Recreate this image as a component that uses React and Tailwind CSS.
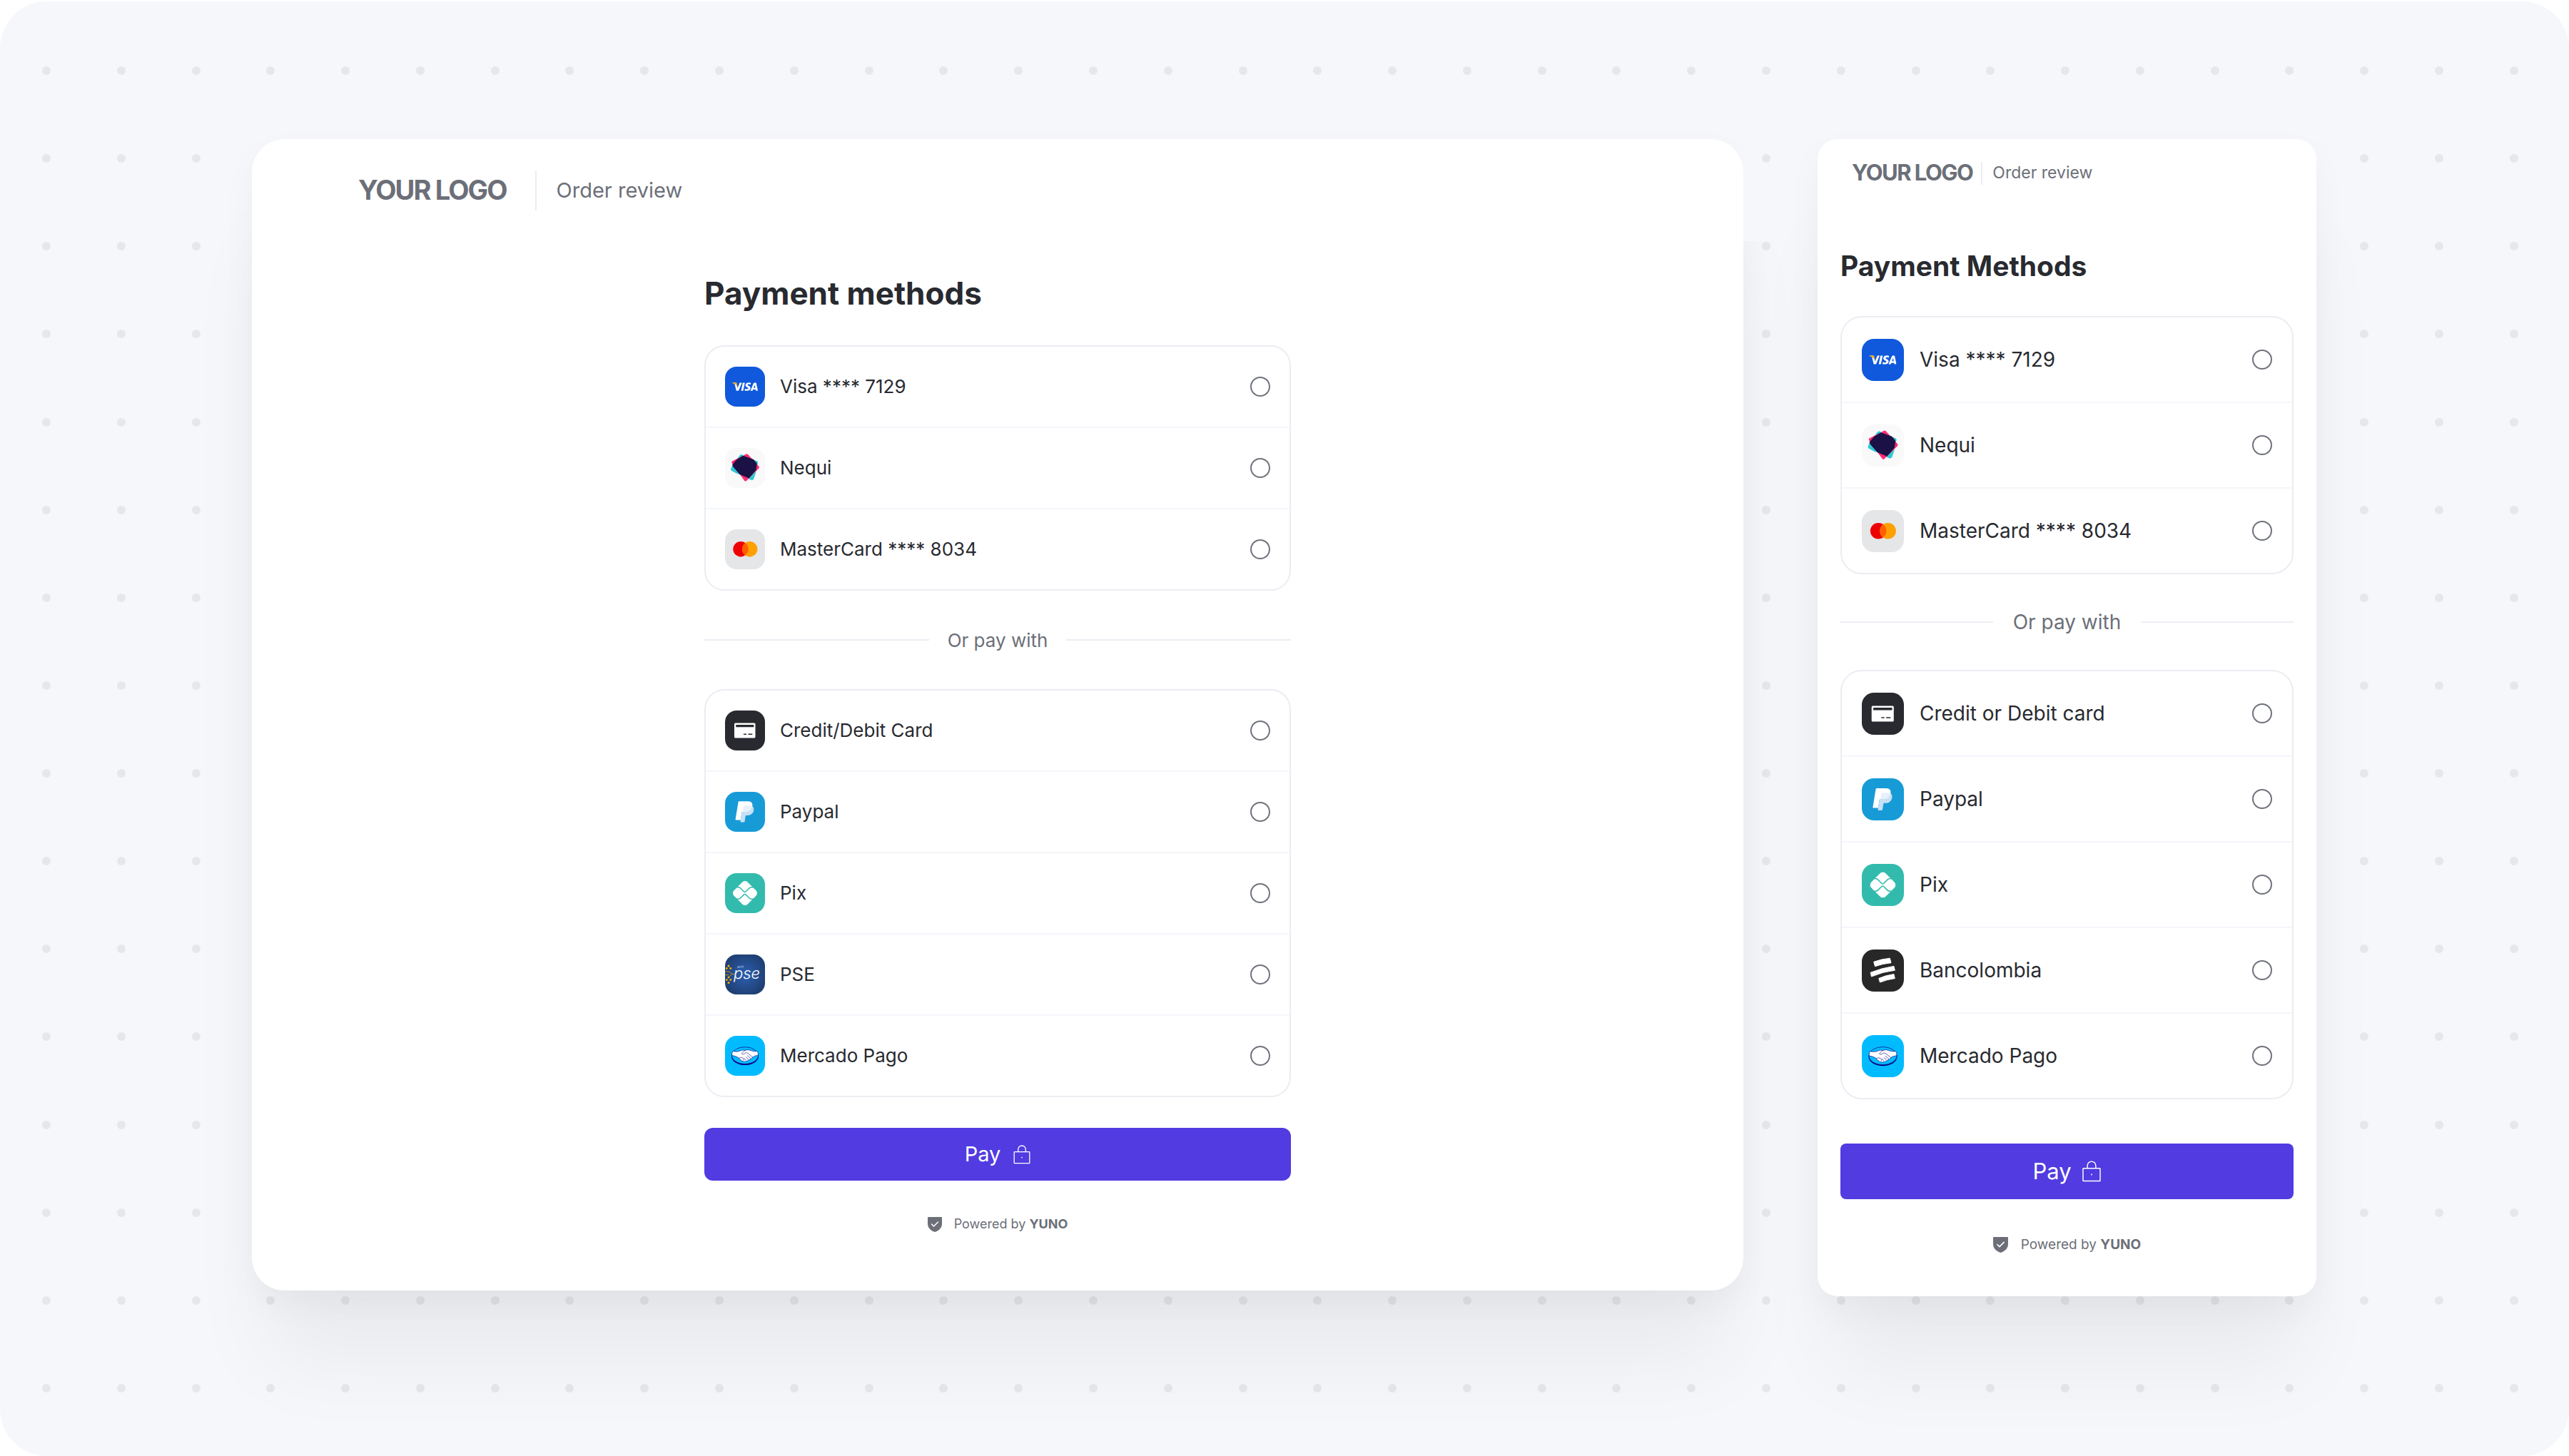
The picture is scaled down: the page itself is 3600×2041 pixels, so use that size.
import React from "react";
import { SiVisa } from "react-icons/si";
import { FaPix } from "react-icons/fa6";

function VisaIcon() {
  return (
    <span className="flex size-full items-center justify-center bg-[#1059dc]">
      <svg viewBox="0 0 56 56" className="size-full" aria-hidden="true">
        <SiVisa x="10" y="10" size={36} color="#ffffff" />
        <path d="M9.800 22.300h5.200c.8 0 1.300.4 1.500 1.200l1.100 5.200c-1.300-3-4-5.200-7.800-6.200z" fill="#f5a60b" />
      </svg>
    </span>
  );
}

function NequiIcon() {
  return (
    <svg viewBox="0 0 56 56" className="size-full bg-[#f9f9f9]" aria-hidden="true">
      <path d="M23 11.500L44 20.500L37 43L10.500 29.500z" fill="#2fc8d6" stroke="#2fc8d6" strokeWidth="4" strokeLinejoin="round" />
      <path d="M30.500 10.200L46 27.200L28.700 44.500L11.300 20z" fill="#ff2d73" stroke="#ff2d73" strokeWidth="4" strokeLinejoin="round" />
      <path d="M41.500 17l3.500 1.500c1 .5 1.300 1.300 1 2.300l-1 3zM9.600 25.500l10 12-10.300-5.500c-1-.6-1.300-1.500-1-2.500zM44 32l-3.800 11.500c-.4 1.100-1.200 1.600-2.300 1.300l-4-2zM17.500 14l3.500-4c.8-.9 1.600-1.100 2.700-.7l2.800 1.200z" fill="#2fc8d6" />
      <path d="M24 11.500c1-.6 1.800-.6 2.800-.3L40 16l4 4.700c.6.700.8 1.500.7 2.400l-1.200 8L33.500 42.500 20.500 37 10.800 25.800c-.6-.9-.8-1.900-.3-2.900L16.500 16z" fill="#1b1145" />
    </svg>
  );
}

function MasterCardIcon() {
  return (
    <svg viewBox="0 0 56 56" className="size-full bg-[#e5e6e8]" aria-hidden="true">
      <circle cx="22" cy="27.700" r="10.700" fill="#ed0006" />
      <circle cx="34.700" cy="27.700" r="10.700" fill="#ffa000" />
      <path d="M28.350 19.100a10.700 10.700 0 0 1 0 17.200a10.700 10.700 0 0 1 0-17.200z" fill="#ff5f00" />
    </svg>
  );
}

function CreditCardIcon() {
  return (
    <svg viewBox="0 0 56 56" className="size-full bg-[#282a30]" aria-hidden="true">
      <rect x="13" y="17.500" width="29.500" height="21" rx="1.500" fill="#fff" />
      <path d="M15.300 20h25v3.300h-25z" fill="#282a30" />
      <path d="M26.500 33.200h3M33 33.200h4.800" stroke="#282a30" strokeWidth="1.500" strokeLinecap="round" />
    </svg>
  );
}

function PaypalIcon() {
  return (
    <svg viewBox="0 0 56 56" className="size-full bg-[#179bd7]" aria-hidden="true">
      <path d="M20.300 13.200h12.200c4.600 0 6.600 3 5.800 7-1 5.400-4.800 7.800-9.800 7.800h-3.600c-.8 0-1.400.5-1.500 1.300l-1.600 10.200h-6.500c-.5 0-.8-.4-.7-.9l4-24.300c.1-.7.800-1.100 1.700-1.100z" fill="#fff" />
      <path d="M38.300 20.200c1.800 1.200 2.400 3.300 1.900 5.800-1 4.900-4.500 7-9 7h-1.200c-.7 0-1.200.5-1.300 1.100l-1.200 7.700c-.1.500-.5.800-1 .8H22c-.4 0-.7-.4-.6-.8l2-12.500c.1-.8.700-1.300 1.500-1.300h3.600c5 0 8.800-2.400 9.800-7.800z" fill="#c7e0f5" />
      <path d="M26.500 19.500c3.500-.6 8-.6 11.800.7-1 5.400-4.800 7.800-9.800 7.800h-3.600l1-7.300c.1-.7.300-1.100.6-1.200z" fill="#e8f1fb" />
    </svg>
  );
}

function PixIcon() {
  return (
    <svg viewBox="0 0 56 56" className="size-full bg-[#32bbad]" aria-hidden="true">
      <FaPix x="11" y="11" size={34} color="#ffffff" />
    </svg>
  );
}

function PseIcon() {
  return (
    <svg viewBox="0 0 56 56" className="size-full" aria-hidden="true">
      <defs>
        <radialGradient id="pse-glow" cx="50%" cy="50%" r="55%">
          <stop offset="0" stopColor="#2c5fb2" />
          <stop offset="1" stopColor="#1f3f72" />
        </radialGradient>
      </defs>
      <rect width="56" height="56" fill="url(#pse-glow)" />
      <g fill="#f9b000">
        <circle cx="5" cy="16" r="1.500" />
        <circle cx="2.300" cy="19.500" r="1.400" />
        <circle cx="7.800" cy="19.500" r="1.400" />
        <circle cx="5" cy="32" r="1.400" />
        <circle cx="2.300" cy="35.500" r="1.400" />
        <circle cx="7.800" cy="35.500" r="1.400" />
        <circle cx="5" cy="39.500" r="1.500" />
      </g>
      <path d="M0 24h6l4 3.500h4M0 28.500h5M5 32l4.500-4.500" fill="none" stroke="#c98f1e" strokeWidth="1" />
      <text x="12" y="34" fill="#fff" fontFamily="Inter, 'Liberation Sans', sans-serif" fontStyle="italic" fontWeight="300" fontSize="22">pse</text>
      <text x="17" y="19" fill="#b9c8e4" fontFamily="Inter, 'Liberation Sans', sans-serif" fontStyle="italic" fontSize="5">ach</text>
    </svg>
  );
}

function MercadoPagoIcon() {
  return (
    <svg viewBox="0 0 56 56" className="size-full bg-[#00bcff]" aria-hidden="true">
      <ellipse cx="28" cy="28.800" rx="19" ry="12.300" fill="#0a0080" />
      <ellipse cx="28" cy="27.600" rx="18.600" ry="11.900" fill="#00bcff" stroke="#0a0080" strokeWidth="0.700" />
      <path
        d="M11 21.500c3.600 1 7 .9 10.200-.5 2.300-1 4.600-1.300 6.800-.5 2.600-1.200 5.200-1.100 8 0 3.300 1.200 6 1.600 9 .9 1.300 2 1.700 4 1.200 6-3.500.3-6.200 1.300-8.200 3.200-.6 1.600-1.600 2.100-3 1.900-.5 1.300-1.500 1.900-2.800 1.700-.7 1.200-1.900 1.600-3.100 1-1 1.300-2.800 1.300-3.900 0-1.600.4-2.700-.2-2.900-1.600-1.500.1-2.400-.6-2.400-1.900-2.400-2.200-6-3.500-10.100-4.100-.3-2.200.1-4.300 1.200-6.100z"
        fill="#fff"
        stroke="#0a0080"
        strokeWidth="0.600"
        strokeLinejoin="round"
      />
      <path
        d="M28 20.500c-2.200.8-3.500 2.800-4.700 4.300.9 1.400 3.200 1.200 5.200-.8 1.400-.5 2.700-.1 3.900.9l6 4.900M31.500 27.800l4.300 3.800M29.500 30l3.200 2.900M27.200 31.700l2 2.100M19.900 31.500c.5-1.300 1.700-1.600 2.700-.8 1-.8 2.200-.3 2.300 1 1.200-.2 1.900.6 1.600 2.200"
        fill="none"
        stroke="#0a0080"
        strokeWidth="0.600"
        strokeLinecap="round"
        strokeLinejoin="round"
      />
    </svg>
  );
}

function BancolombiaIcon() {
  return (
    <svg viewBox="0 0 59 59" className="size-full bg-[#282828]" aria-hidden="true">
      <g fill="#fff" stroke="#fff" strokeWidth="1" strokeLinejoin="round">
        <path d="M16.700 17.300Q27.500 13.300 39.300 12.200L41 18.700Q29.500 19.700 18.500 23.700z" />
        <path d="M12.200 32.300Q27.500 26 44.900 23.400L46.300 29.200Q29 31.200 13.500 38z" />
        <path d="M23.800 40.500Q34 36 44.900 34.600L46.300 40.600Q35.500 42 25.500 46z" />
      </g>
    </svg>
  );
}

function LockIcon({ className }) {
  return (
    <svg viewBox="0 0 24 27" className={className} fill="none" stroke="currentColor" strokeWidth="1.300" aria-hidden="true">
      <rect x="1.200" y="9.700" width="21.600" height="16" rx="0.600" />
      <path d="M6.700 9.700V6.300a5.300 5.300 0 0 1 10.600 0v3.400" />
      <circle cx="12" cy="17.600" r="0.900" fill="currentColor" stroke="none" />
    </svg>
  );
}

function ShieldIcon({ className }) {
  return (
    <svg viewBox="0 0 20 21" className={className} aria-hidden="true">
      <path d="M1 0h18a1 1 0 0 1 1 1v8.500c0 5.500-4 9.500-10 11.500C4 19 0 15 0 9.500V1a1 1 0 0 1 1-1z" fill="#6c6f78" />
      <path d="M5.500 10l3 3 6-6" fill="none" stroke="#fff" strokeWidth="1.500" strokeLinecap="round" strokeLinejoin="round" />
    </svg>
  );
}

const desktop = {
  heading: "Payment methods",
  saved: [
    ["visa", "Visa **** 7129", VisaIcon],
    ["nequi", "Nequi", NequiIcon],
    ["mastercard", "MasterCard **** 8034", MasterCardIcon],
  ],
  others: [
    ["card", "Credit/Debit Card", CreditCardIcon],
    ["paypal", "Paypal", PaypalIcon],
    ["pix", "Pix", PixIcon],
    ["pse", "PSE", PseIcon],
    ["mercado", "Mercado Pago", MercadoPagoIcon],
  ],
  css: {
    list: "rounded-[28px]",
    row: "h-28 gap-[21px] px-[27px]",
    icon: "size-14 rounded-2xl",
    label: "pb-0.5 text-[26px]",
    divider: "h-[138px] gap-[26px] text-[26px]",
  },
};

const mobile = {
  heading: "Payment Methods",
  saved: desktop.saved,
  others: [
    ["card", "Credit or Debit card", CreditCardIcon],
    ["paypal", "Paypal", PaypalIcon],
    ["pix", "Pix", PixIcon],
    ["bancolombia", "Bancolombia", BancolombiaIcon],
    ["mercado", "Mercado Pago", MercadoPagoIcon],
  ],
  css: {
    list: "rounded-[30px]",
    row: "h-[118px] gap-[22px] px-7",
    icon: "size-[59px] rounded-[17px]",
    label: "text-[28px]",
    divider: "h-[134px] gap-7 text-[28px]",
  },
};

function MethodList({ items, group, css }) {
  return (
    <ul className={`divide-y-2 divide-[#f4f6fb] overflow-hidden border-2 border-[#ebedf3] ${css.list}`}>
      {items.map(([id, label, Icon]) => (
        <li key={id}>
          <label className={`flex cursor-pointer items-center text-[#282a30] ${css.row}`}>
            <span className={`block shrink-0 overflow-hidden ${css.icon}`}>
              <Icon />
            </span>
            <span className={`flex-1 ${css.label}`}>{label}</span>
            <input
              type="radio"
              name={group}
              value={id}
              className="size-7 shrink-0 appearance-none rounded-full border-2 border-[#70737c] checked:border-8 checked:border-[#513be1]"
            />
          </label>
        </li>
      ))}
    </ul>
  );
}

function Methods({ view, group }) {
  return (
    <>
      <MethodList items={view.saved} group={group} css={view.css} />
      <div className={`flex items-center text-[#6c6f78] ${view.css.divider}`}>
        <span className="h-0.5 flex-1 bg-[#ebedf3]" />
        <span>Or pay with</span>
        <span className="h-0.5 flex-1 bg-[#ebedf3]" />
      </div>
      <MethodList items={view.others} group={group} css={view.css} />
    </>
  );
}

function DotGrid() {
  return (
    <div className="absolute inset-0 flex flex-col justify-between pt-[91px] pr-[71px] pb-[89px] pl-[59px]" aria-hidden="true">
      {Array.from({ length: 16 }, (_, r) => (
        <div key={r} className="flex justify-between">
          {Array.from({ length: 34 }, (_, c) => (
            <span key={c} className="size-3 rounded-full bg-[#e6e7e9]" />
          ))}
        </div>
      ))}
    </div>
  );
}

export default function App() {
  return (
    <main className="min-h-screen bg-white pt-0.5 font-['Inter','Liberation_Sans',sans-serif] font-normal">
      <div className="relative min-h-[calc(100vh-2px)] overflow-hidden rounded-[66px] bg-[#f5f7fb]">
        <DotGrid />
        <div className="grid grid-cols-[2090fr_699fr] items-start gap-[104px] py-[193px] pr-[354px] pl-[353px]">
          <section className="relative rounded-[46px] bg-white pb-[81px] shadow-[0_20px_50px_rgba(0,0,0,0.04),0_120px_120px_-20px_rgba(0,0,0,0.05)]">
            <div className="absolute top-0 left-full h-[143px] w-[104px] bg-[#f5f7fb]" aria-hidden="true">
              <span className="mt-[21px] ml-[26px] block size-3 rounded-full bg-[#e6e7e9]" />
            </div>
            <header className="flex h-[143px] items-center pl-[149px] text-[#6c6f78]">
              <span className="text-[38px] font-bold tracking-tighter">YOUR LOGO</span>
              <span className="mr-7 ml-10 h-14 w-0.5 bg-[#ebedf3]" />
              <span className="text-[29px]">Order review</span>
            </header>
            <form className="mx-auto max-w-[822px] pt-[45px]" onSubmit={(e) => e.preventDefault()}>
              <h1 className="mb-[45px] text-[44px] leading-[56px] font-bold text-[#282a30]">{desktop.heading}</h1>
              <Methods view={desktop} group="desktop-method" />
              <button
                type="submit"
                className="mt-[43px] flex h-[74px] w-full items-center justify-center gap-[18px] rounded-xl bg-[#513be1] text-[29px] text-white"
              >
                Pay
                <LockIcon className="h-[27px] w-6" />
              </button>
              <p className="mt-[49px] flex items-center justify-center gap-[17px] text-[18px] leading-6 text-[#6c6f78]">
                <ShieldIcon className="h-[21px] w-5" />
                <span>
                  Powered by <strong className="font-bold">YUNO</strong>
                </span>
              </p>
            </form>
          </section>

          <section className="relative rounded-[28px] bg-white px-8 pb-[60px] shadow-[0_20px_50px_rgba(0,0,0,0.04),0_120px_120px_-20px_rgba(0,0,0,0.05)]">
            <header className="flex h-[95px] items-center pl-4 text-[#6c6f78]">
              <span className="text-[31px] font-bold tracking-tighter">YOUR LOGO</span>
              <span className="mr-3.5 ml-3 h-8 w-0.5 bg-[#ebedf3]" />
              <span className="text-[23px]">Order review</span>
            </header>
            <form className="pt-[59px]" onSubmit={(e) => e.preventDefault()}>
              <h2 className="mb-[46px] text-[39px] leading-[48px] font-bold text-[#282a30]">{mobile.heading}</h2>
              <Methods view={mobile} group="mobile-method" />
              <button
                type="submit"
                className="mt-[62px] flex h-[78px] w-full items-center justify-center gap-3.5 rounded-lg bg-[#513be1] text-[31px] text-white"
              >
                Pay
                <LockIcon className="h-[30px] w-7" />
              </button>
              <p className="mt-[52px] flex items-center justify-center gap-[18px] text-[19px] leading-6 text-[#6c6f78]">
                <ShieldIcon className="h-[22px] w-[21px]" />
                <span>
                  Powered by <strong className="font-bold">YUNO</strong>
                </span>
              </p>
            </form>
          </section>
        </div>
      </div>
    </main>
  );
}
